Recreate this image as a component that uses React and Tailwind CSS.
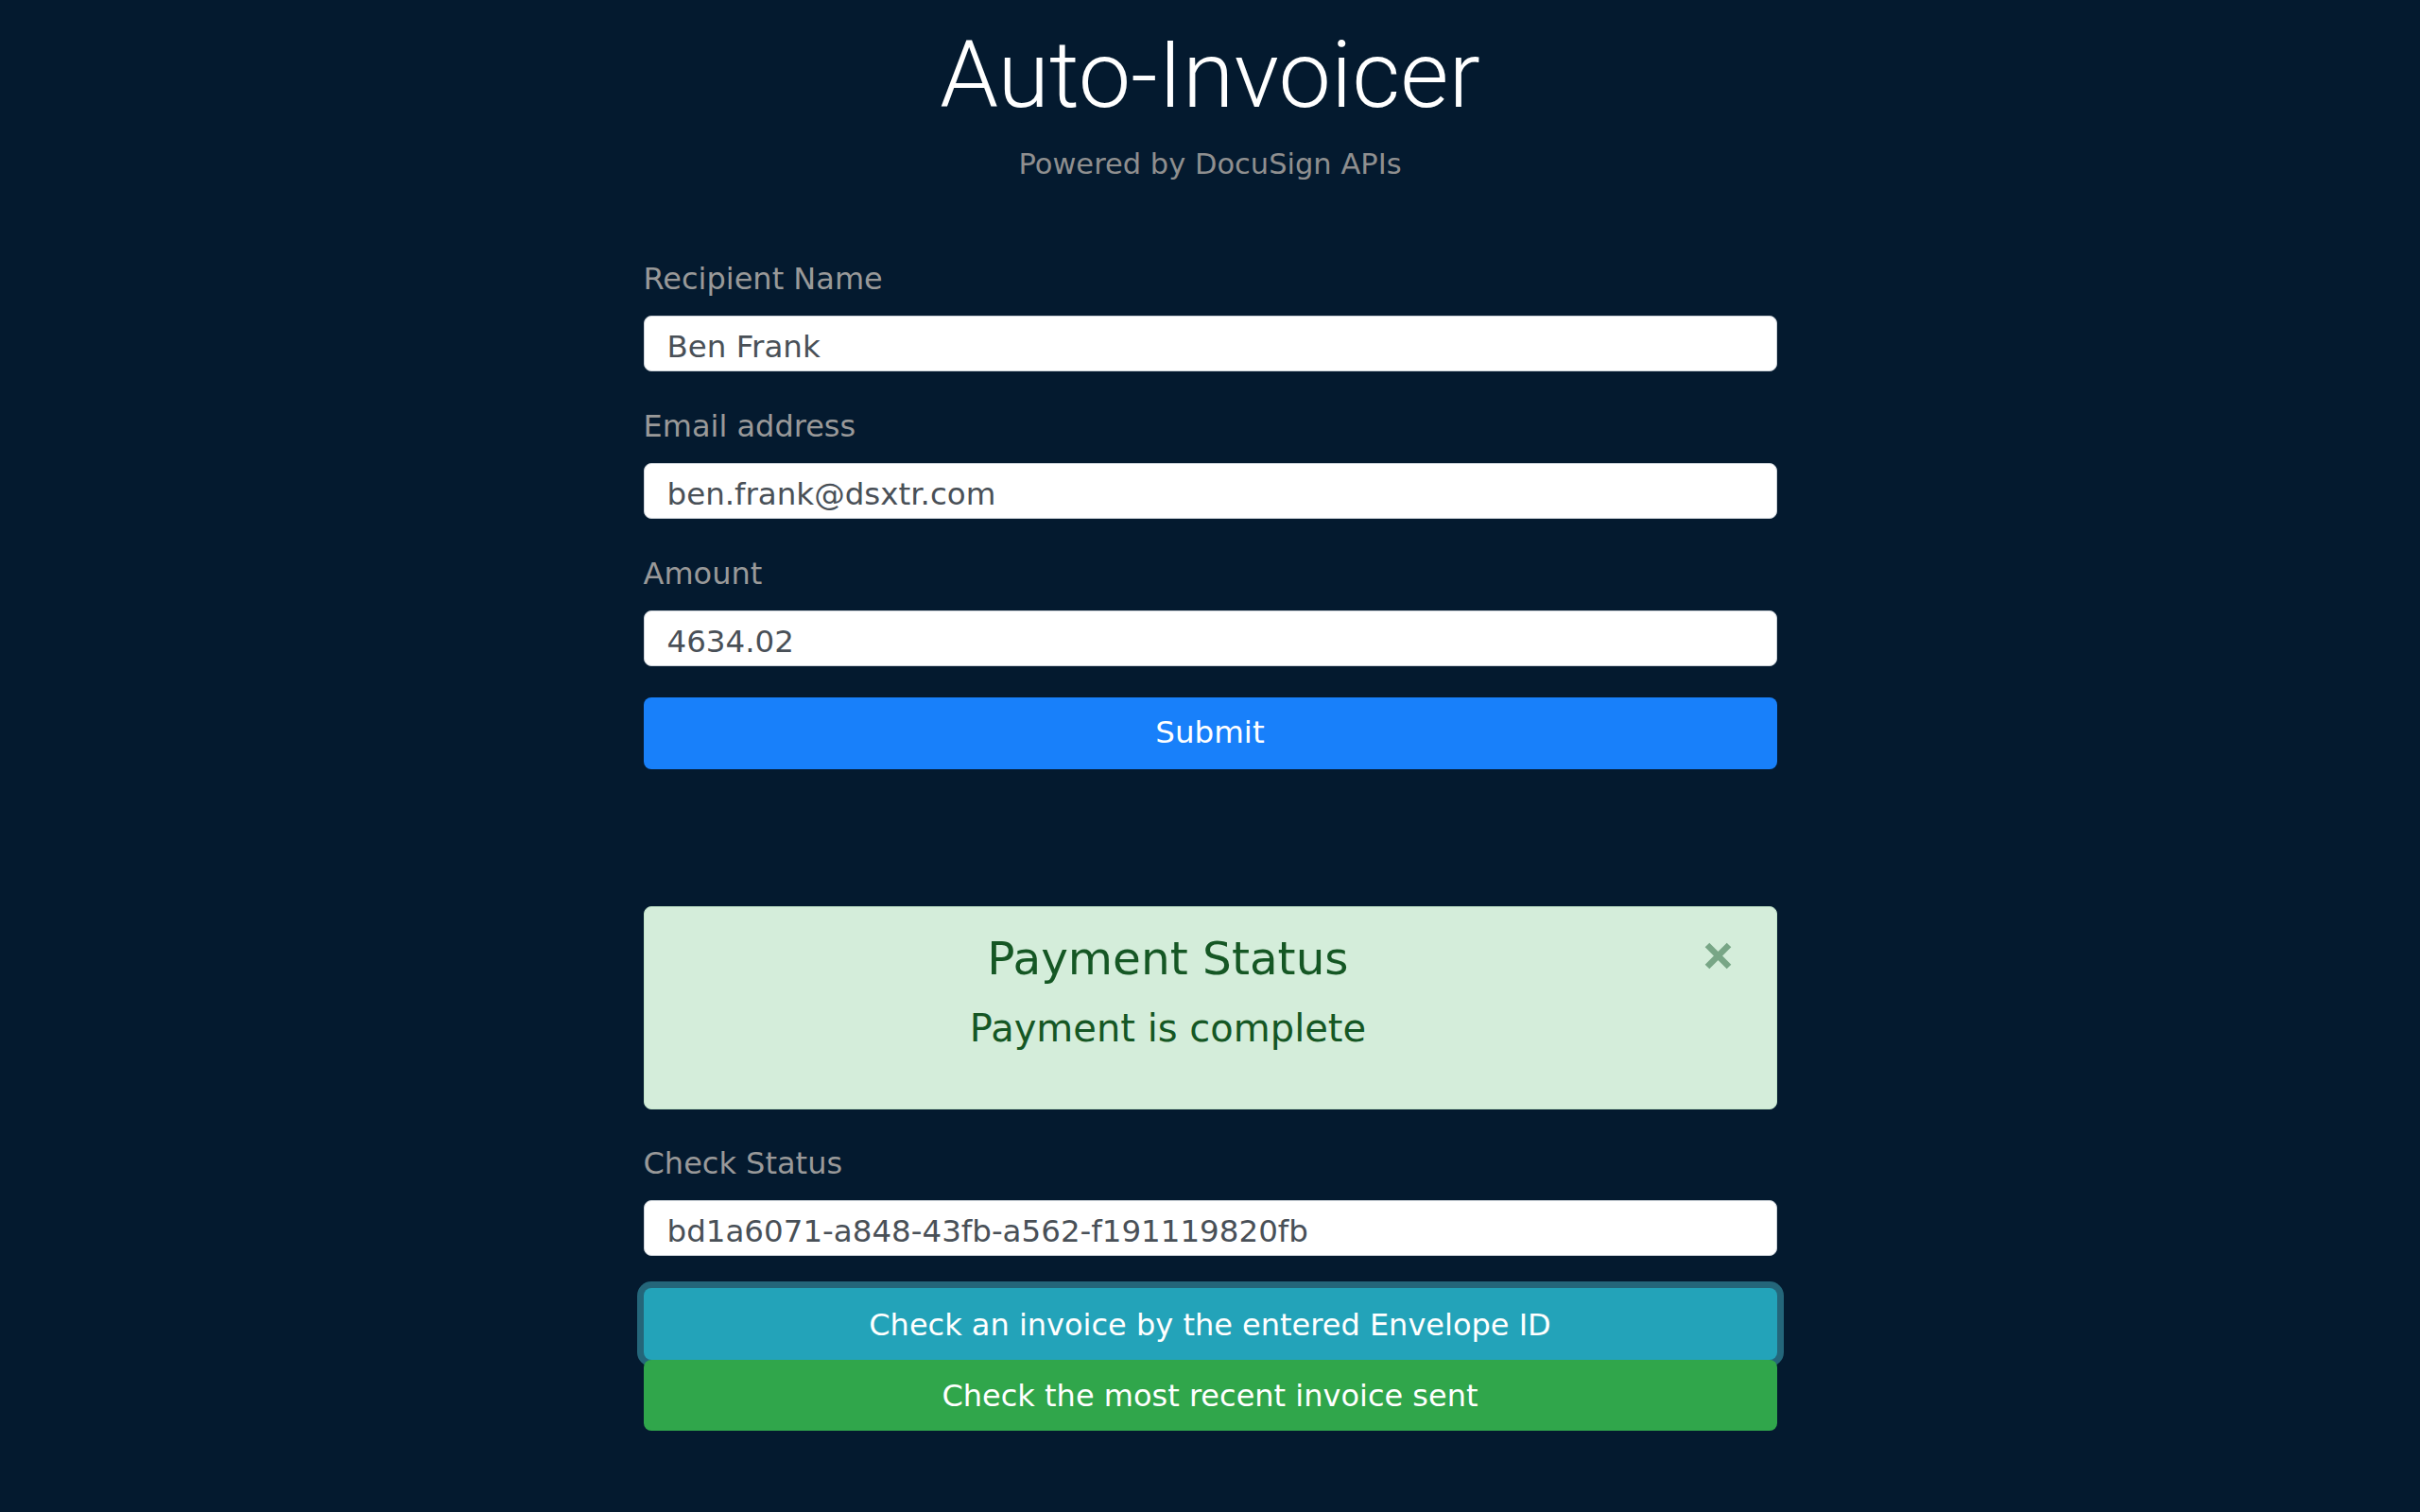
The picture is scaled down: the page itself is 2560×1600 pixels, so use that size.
import React from 'react';

const Field = ({ label, value, className = '' }) => (
  <div className={className}>
    <label className="block text-[32px] leading-[46.5px] text-[#999999]">
      {label}
    </label>
    <input
      readOnly
      value={value}
      className="mt-[16px] block h-[58.5px] w-full rounded-[8px] border border-[#ced4da] bg-white px-[24px] pt-[6px] text-[32.5px] text-[#495057] outline-none"
    />
  </div>
);

const App = () => {
  return (
    <div className="min-h-screen bg-[#041a2f] font-['DejaVu_Sans',sans-serif]">
      <div className="mx-auto w-[1199px] pt-[20px]">
        <h1 className="text-center font-['Roboto',sans-serif] text-[99px] font-light leading-[1.2] text-white">
          Auto-Invoicer
        </h1>
        <p className="mt-[12px] text-center text-[30.5px] leading-[45px] text-[#8f8f8f]">
          Powered by DocuSign APIs
        </p>

        {/* invoice form */}
        <form className="mt-[76px]" onSubmit={(e) => e.preventDefault()}>
          <Field label="Recipient Name" value="Ben Frank" />
          <Field
            label="Email address"
            value="ben.frank@dsxtr.com"
            className="mt-[35px]"
          />
          <Field label="Amount" value="4634.02" className="mt-[35px]" />
          <button
            type="submit"
            className="mt-[33px] flex h-[76px] w-full items-center justify-center rounded-[8px] bg-[#1880fa] text-[32.5px] text-white"
          >
            Submit
          </button>
        </form>

        {/* status alert */}
        <div className="relative mt-[145px] h-[215px] rounded-[8px] border border-[#c3e6cb] bg-[#d4edda] pl-[36px] pr-[125px] pt-[26px] text-center text-[#155724]">
          <h3 className="text-[48.5px] leading-[57px]">Payment Status</h3>
          <p className="mt-[16px] text-[40px] leading-[58px]">
            Payment is complete
          </p>
          <button
            type="button"
            className="absolute right-[47px] top-[37px] h-[29px] w-[29px]"
          >
            <svg viewBox="0 0 29 29" className="h-[29px] w-[29px]">
              <path
                d="M3 3 L26 26 M26 3 L3 26"
                stroke="#78a686"
                strokeWidth="6.5"
                fill="none"
              />
            </svg>
          </button>
        </div>

        {/* check status */}
        <Field
          label="Check Status"
          value="bd1a6071-a848-43fb-a562-f191119820fb"
          className="mt-[34px]"
        />
        <button
          type="button"
          className="mt-[34px] flex h-[76px] w-full items-center justify-center rounded-[8px] bg-[#23a3b9] pt-[2px] text-[32px] text-white shadow-[0_0_0_7px_#24667a]"
        >
          Check an invoice by the entered Envelope ID
        </button>
        <button
          type="button"
          className="relative flex h-[75px] w-full items-center justify-center rounded-[8px] bg-[#30a64b] pt-[2px] text-[32px] text-white"
        >
          Check the most recent invoice sent
        </button>
      </div>
    </div>
  );
};

export default App;
